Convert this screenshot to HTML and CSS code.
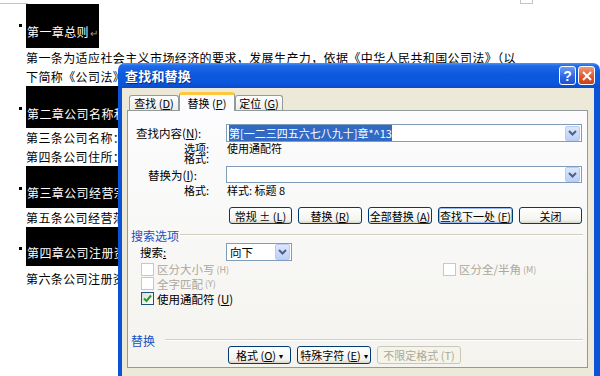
FILE: index.html
```html
<!DOCTYPE html>
<html lang="zh-CN">
<head>
    <meta charset="UTF-8">
    <title>查找和替换</title>
    <link rel="stylesheet" href="styles.css">
</head>
<body>
<div class="page">
    <div class="doc-top"><span class="mark-line"></span><span class="mark-box"></span></div>

    <div class="heading">
        <i class="bullet b-20"></i>
        <div class="heading-box hb-1">第一章总则<span class="para">↵</span></div>
    </div>
    <p class="line">第一条为适应社会主义市场经济的要求，发展生产力，依据《中华人民共和国公司法》（以</p>
    <p class="line">下简称《公司法》）和其他有关法律、行政法规的规定，制订本章程。</p>

    <div class="heading">
        <i class="bullet b-21"></i>
        <div class="heading-box wide hb-2">第二章公司名称和住所</div>
    </div>
    <p class="line">第三条公司名称：</p>
    <p class="line">第四条公司住所：</p>

    <div class="heading">
        <i class="bullet b-21"></i>
        <div class="heading-box wide hb-3">第三章公司经营宗旨和范围</div>
    </div>
    <p class="line">第五条公司经营范围：</p>

    <div class="heading">
        <i class="bullet b-20"></i>
        <div class="heading-box wide hb-4">第四章公司注册资本</div>
    </div>
    <p class="line last">第六条公司注册资本：</p>
</div>

<div class="dialog">
    <div class="titlebar">
        <span class="title">查找和替换</span>
        <div class="title-buttons">
            <span class="tb-btn help">?</span>
            <span class="tb-btn close">
                <svg width="10" height="10" viewBox="0 0 10 10"><path d="M1 1L9 9M9 1L1 9" stroke="#fff" stroke-width="2"/></svg>
            </span>
        </div>
    </div>

    <div class="frame">
        <div class="tabs">
            <div class="tab t-find">查找 (<u>D</u>)</div>
            <div class="tab t-replace active">替换 (<u>P</u>)</div>
            <div class="tab t-goto">定位 (<u>G</u>)</div>
        </div>

        <div class="panel">
            <div class="row row-find">
                <span class="lbl lbl-find">查找内容(<u>N</u>):</span>
                <div class="combo">
                    <span class="combo-text"><span class="sel">第[一二三四五六七八九十]章*^13</span></span>
                    <span class="drop"><svg width="9" height="6" viewBox="0 0 9 6"><path d="M1 1L4.5 4.5L8 1" fill="none" stroke="#4d6185" stroke-width="2"/></svg></span>
                </div>
            </div>
            <div class="info">
                <div class="info-row"><span class="lbl lbl-info">选项:</span><span class="val">使用通配符</span></div>
                <div class="info-row"><span class="lbl lbl-info">格式:</span><span class="val"></span></div>
            </div>

            <div class="row row-replace">
                <span class="lbl lbl-replace">替换为(<u>I</u>):</span>
                <div class="combo">
                    <span class="combo-text"></span>
                    <span class="drop"><svg width="9" height="6" viewBox="0 0 9 6"><path d="M1 1L4.5 4.5L8 1" fill="none" stroke="#4d6185" stroke-width="2"/></svg></span>
                </div>
            </div>
            <div class="info-row info-format"><span class="lbl lbl-info">格式:</span><span class="val">样式: 标题 8</span></div>

            <div class="buttons buttons-main">
                <span class="btn w-63">常规 ± (<u>L</u>)</span>
                <span class="btn w-64">替换 (<u>R</u>)</span>
                <span class="btn w-64">全部替换 (<u>A</u>)</span>
                <span class="btn w-75 default">查找下一处 (<u>F</u>)</span>
                <span class="btn w-63">关闭</span>
            </div>

            <div class="group-head">
                <span class="group-title">搜索选项</span>
                <span class="rule"></span>
            </div>

            <div class="row row-search">
                <span class="lbl lbl-search">搜索<u>:</u></span>
                <div class="combo select">
                    <span class="combo-text">向下</span>
                    <span class="drop"><svg width="9" height="6" viewBox="0 0 9 6"><path d="M1 1L4.5 4.5L8 1" fill="none" stroke="#4d6185" stroke-width="2"/></svg></span>
                </div>
            </div>

            <div class="checks">
                <div class="check-row split">
                    <span class="check disabled"><span class="box"></span>区分大小写 <small>(H)</small></span>
                    <span class="check disabled"><span class="box"></span>区分全/半角 <small>(M)</small></span>
                </div>
                <div class="check-row">
                    <span class="check disabled"><span class="box"></span>全字匹配 <small>(Y)</small></span>
                </div>
                <div class="check-row">
                    <span class="check"><span class="box">
                        <svg width="11" height="11" viewBox="0 0 11 11"><path d="M2 5.5L4.5 8L9 2.5" fill="none" stroke="#21a121" stroke-width="2"/></svg>
                    </span>使用通配符 (<u>U</u>)</span>
                </div>
            </div>

            <div class="group-head group-replace">
                <span class="group-title">替换</span>
                <span class="rule"></span>
            </div>

            <div class="buttons buttons-bottom">
                <span class="btn w-63">格式 (<u>O</u>) <small>▾</small></span>
                <span class="btn w-74">特殊字符 (<u>E</u>) <small>▾</small></span>
                <span class="btn w-84 disabled">不限定格式 (T)</span>
            </div>
        </div>
    </div>
</div>
</body>
</html>
```

FILE: styles.css
```css
body {
    margin: 0;
    font-family: "Noto Sans CJK SC", "Liberation Sans", sans-serif;
    background-color: #fff;
    width: 600px;
    height: 376px;
    overflow: hidden;
    position: relative;
}

/* document behind the dialog */

.page {
    font-size: 12px;
    letter-spacing: 0.4px;
    color: #000;
}

.doc-top {
    display: flex;
    height: 4px;
}

.mark-line {
    width: 28px;
    height: 3px;
    border-bottom: 1px solid #c4c4c4;
}

.mark-box {
    margin-left: auto;
    margin-right: 67px;
    width: 11px;
    height: 3px;
    border: 1px solid #c4c4c4;
    border-top: none;
}

.heading {
    display: flex;
    align-items: flex-start;
}

.bullet {
    width: 3px;
    height: 3px;
    background-color: #000;
    margin-left: 19px;
    margin-right: 4px;
}

.b-20 { margin-top: 20px; }
.b-21 { margin-top: 21px; }

.heading-box {
    background-color: #000;
    color: #fff;
    width: 72px;
    padding-left: 1px;
    line-height: 20px;
    white-space: nowrap;
}

.heading-box.wide {
    width: auto;
    padding-right: 10px;
}

.hb-1 { padding-top: 18px; padding-bottom: 5px; }
.hb-2 { padding-top: 18px; padding-bottom: 4px; }
.hb-3 { padding-top: 17px; padding-bottom: 5px; }
.hb-4 { padding-top: 16px; padding-bottom: 3px; }

.para {
    color: #9a9a9a;
    font-size: 10px;
    margin-left: 1px;
}

.line {
    margin: 0 0 0 26px;
    line-height: 19px;
    white-space: nowrap;
}

.line.last {
    padding-top: 3px;
}

/* find & replace dialog */

.dialog {
    position: absolute;
    left: 118px;
    top: 63px;
    width: 482px;
    height: 330px;
    display: flex;
    flex-direction: column;
    font-size: 11.5px;
    color: #000;
}

.titlebar {
    height: 25px;
    display: flex;
    align-items: center;
    padding-left: 7px;
    border-radius: 7px 7px 0 0;
    background: linear-gradient(to bottom, #4a93f7 0%, #1f68e8 12%, #0c5ae0 45%, #0a56dc 80%, #0a4cc9 100%);
}

.title {
    color: #fff;
    font-weight: bold;
    font-size: 13px;
    letter-spacing: 0.2px;
    text-shadow: 1px 1px 0 #0a2a80;
}

.title-buttons {
    margin-left: auto;
    margin-right: 5px;
    display: flex;
    gap: 2px;
}

.tb-btn {
    width: 15px;
    height: 17px;
    border: 1px solid #fff;
    border-radius: 3px;
    display: flex;
    align-items: center;
    justify-content: center;
    color: #fff;
    font-family: "Liberation Sans", sans-serif;
    font-weight: bold;
    font-size: 14px;
}

.help {
    background: linear-gradient(to bottom, #6a9cf7, #2d63e2 60%, #1f52d0);
}

.close {
    background: linear-gradient(to bottom, #ee9a7c, #e2582e 55%, #c8411c);
}

.frame {
    flex: 1;
    background-color: #ece9d8;
    border-left: 4px solid #0a52d6;
    border-right: 6px solid #0a52d6;
    padding: 0 6px 0 5px;
}

.tabs {
    display: flex;
    align-items: flex-end;
    padding: 4px 0 0 2px;
    margin-bottom: -1px;
}

.tab {
    height: 15px;
    margin-bottom: 1px;
    border: 1px solid #919b9c;
    border-bottom: none;
    border-radius: 3px 3px 0 0;
    background: linear-gradient(to bottom, #fff, #ecebe6);
    display: flex;
    align-items: center;
    justify-content: center;
    box-sizing: border-box;
    font-size: 11px;
}

.t-find { width: 50px; }
.t-replace { width: 56px; }
.t-goto { width: 48px; }

.tab.active {
    height: 19px;
    margin-bottom: 0;
    border-top: 3px solid #ffc83c;
    background: #fcfcfe;
    position: relative;
    z-index: 1;
}

.panel {
    height: 258px;
    box-sizing: border-box;
    border: 1px solid #919b9c;
    background: linear-gradient(to bottom, #fcfcfe, #f4f3ee);
}

.row {
    display: grid;
    grid-template-columns: 98px 1fr;
    align-items: center;
}

.row-find { margin-top: 13px; height: 17px; }
.row-replace { margin-top: 3px; height: 16px; }
.row-search { margin-top: 1px; height: 18px; }

.lbl {
    white-space: nowrap;
}

.lbl-find { padding-left: 8px; }
.lbl-replace { padding-left: 20px; }
.lbl-info { padding-left: 56px; }
.lbl-search { padding-left: 12px; }

.combo {
    height: 100%;
    box-sizing: border-box;
    margin-right: 5px;
    border: 1px solid #7f9db9;
    background-color: #fff;
    display: flex;
    align-items: center;
    padding: 0 1px;
}

.combo.select {
    width: 66px;
}

.combo-text {
    flex: 1;
    font-size: 11px;
    white-space: nowrap;
    padding-left: 1px;
}

.select .combo-text {
    font-size: 11.5px;
    padding-left: 2px;
}

.sel {
    background-color: #316ac5;
    color: #fff;
}

.drop {
    width: 13px;
    height: 13px;
    border: 1px solid #b9cbf3;
    border-radius: 2px;
    background: linear-gradient(to bottom, #dce7fd, #bccffa);
    display: flex;
    align-items: center;
    justify-content: center;
}

.select .drop {
    height: 14px;
}

.info {
    margin-top: 2px;
}

.info-row {
    display: grid;
    grid-template-columns: 98px 1fr;
    line-height: 10px;
    font-size: 11px;
}

.info-row .val {
    padding-left: 1px;
}

.info-format {
    margin-top: 2px;
    line-height: 12px;
}

.buttons {
    display: flex;
    gap: 6px;
    font-size: 11px;
}

.buttons-main {
    margin-top: 11px;
    padding-left: 101px;
    height: 17px;
}

.buttons-bottom {
    padding-left: 100px;
    height: 18px;
}

.btn {
    box-sizing: border-box;
    border: 1px solid #003c74;
    border-radius: 3px;
    background: linear-gradient(to bottom, #fff, #f3f3ef 80%, #d8d4c8);
    display: flex;
    align-items: center;
    justify-content: center;
    white-space: nowrap;
}

.btn small {
    font-size: 8px;
    margin-left: 3px;
}

.btn.default {
    box-shadow: inset 0 0 0 1px #9bb8ef;
}

.btn.disabled {
    border-color: #c9c7ba;
    color: #aca899;
    background: #f5f4ea;
}

.w-63 { width: 63px; }
.w-64 { width: 64px; }
.w-74 { width: 74px; }
.w-75 { width: 75px; }
.w-84 { width: 84px; }

.group-head {
    display: flex;
    align-items: center;
    margin-top: 4px;
    height: 14px;
    padding-left: 3px;
    margin-right: 4px;
}

.group-title {
    color: #1a4fc4;
    white-space: nowrap;
    font-size: 12px;
}

.rule {
    flex: 1;
    margin-left: 1px;
    border-top: 1px solid #d0d0bf;
    border-bottom: 1px solid #fff;
}

.group-replace {
    margin-top: 28px;
    height: 12px;
}

.group-replace .rule {
    margin-left: 10px;
}

.check-row {
    height: 15px;
    display: flex;
    align-items: center;
    padding-left: 13px;
}

.check-row.split {
    display: grid;
    grid-template-columns: 302px auto;
}

.check {
    display: flex;
    align-items: center;
    white-space: nowrap;
}

.check small {
    font-size: 9px;
    margin-left: 2px;
}

.box {
    width: 13px;
    height: 13px;
    box-sizing: border-box;
    border: 1px solid #1c5180;
    background: linear-gradient(135deg, #dcdcd7, #fff);
    margin-right: 3px;
    display: flex;
    align-items: center;
    justify-content: center;
}

.check.disabled {
    color: #aca899;
}

.check.disabled .box {
    border-color: #cac8bb;
    background: #fff;
}
```
